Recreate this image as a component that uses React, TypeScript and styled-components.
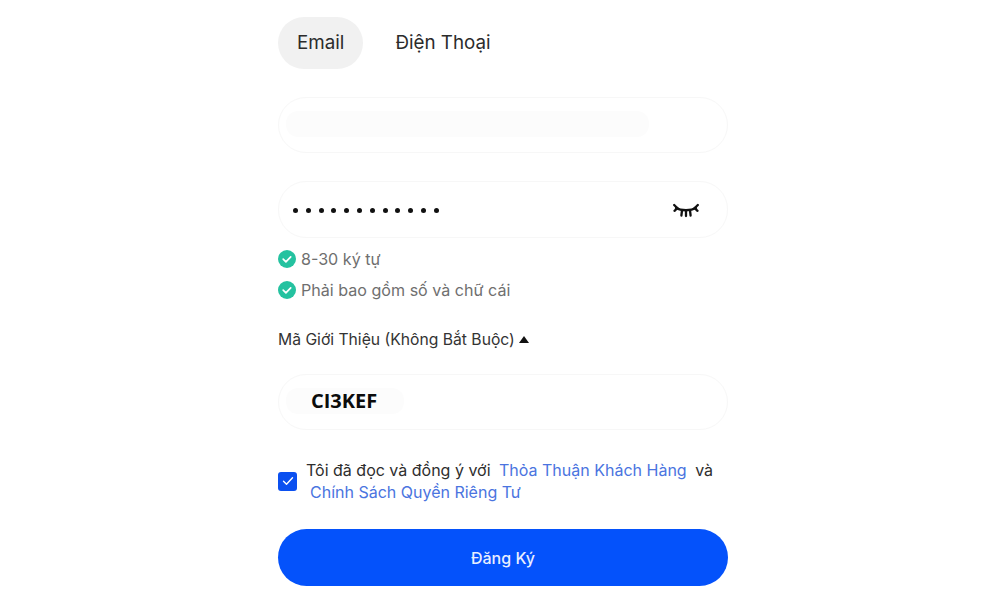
import React from 'react';
import styled, { createGlobalStyle } from 'styled-components';

const GlobalStyle = createGlobalStyle`
  html, body {
    margin: 0;
    padding: 0;
    background: #ffffff;
    font-family: 'Inter', 'Liberation Sans', sans-serif;
  }
`;

const CheckBadge = () => (
  <svg width="18" height="18" viewBox="0 0 18 18" aria-hidden="true">
    <circle cx="9" cy="9" r="9" fill="#25c2a0" />
    <path d="M5.2 9.2l2.7 2.6 4.8-5" fill="none" stroke="#fff" strokeWidth="1.7" strokeLinecap="round" strokeLinejoin="round" />
  </svg>
);

const ClosedEye = () => (
  <svg width="26" height="16" viewBox="0 0 26 16" aria-hidden="true">
    <g fill="none" stroke="#111" strokeWidth="2.3" strokeLinecap="round">
      <path d="M3 6C8 9 18 9 23 6" />
      <path d="M1.2 3l3 3M24.8 3l-3 3M1.5 8.8l3-2.8M24.5 8.8l-3-2.8" />
      <path d="M9 8.5L8.4 13.5M13 9v5M17 8.5l.6 5" />
    </g>
  </svg>
);

const App: React.FC = () => {
  return (
    <Page>
      <GlobalStyle />
      <Form>
        <Tabs>
          <Tab active>Email</Tab>
          <Tab>Điện Thoại</Tab>
        </Tabs>

        <Field>
          <Redacted width={363} />
        </Field>

        <PasswordField>
          <Dots>
            {Array.from({ length: 12 }).map((_, i) => (
              <Dot key={i} />
            ))}
          </Dots>
          <ClosedEye />
        </PasswordField>

        <Rules>
          <Rule>
            <CheckBadge />
            8-30 ký tự
          </Rule>
          <Rule>
            <CheckBadge />
            Phải bao gồm số và chữ cái
          </Rule>
        </Rules>

        <ReferralLabel>
          Mã Giới Thiệu (Không Bắt Buộc)
          <Caret />
        </ReferralLabel>

        <ReferralField>
          <Redacted width={118}>
            <Code>CI3KEF</Code>
          </Redacted>
        </ReferralField>

        <Agreement>
          <CheckBox>
            <svg width="12" height="10" viewBox="0 0 12 10" aria-hidden="true">
              <path d="M1.5 5.2l3 3 6-6.4" fill="none" stroke="#fff" strokeWidth="1.4" strokeLinecap="round" strokeLinejoin="round" />
            </svg>
          </CheckBox>
          <AgreementText>
            <Line>
              Tôi đã đọc và đồng ý với <TermLink>Thỏa Thuận Khách Hàng</TermLink> và
            </Line>
            <Line>
              <TermLink>Chính Sách Quyền Riêng Tư</TermLink>
            </Line>
          </AgreementText>
        </Agreement>

        <Submit>Đăng Ký</Submit>
      </Form>
    </Page>
  );
};

const Page = styled.div`
  width: 1000px;
  height: 600px;
  overflow: hidden;
  display: flex;
  justify-content: center;
  background: #ffffff;
`;

const Form = styled.div`
  width: 450px;
  margin-left: 6px;
  padding-top: 17px;
  display: flex;
  flex-direction: column;
`;

const Tabs = styled.div`
  display: flex;
  height: 52px;
  margin-bottom: 28px;
`;

const Tab = styled.div<{ active?: boolean }>`
  display: flex;
  align-items: center;
  height: 52px;
  padding: 0 ${props => (props.active ? '19px' : '32px')};
  padding-bottom: 2px;
  box-sizing: border-box;
  border-radius: 26px;
  background: ${props => (props.active ? '#f1f1f1' : 'transparent')};
  font-size: 18.8px;
  color: #2b2b2b;
`;

const Field = styled.div`
  box-sizing: border-box;
  height: 56px;
  padding: 0 7px;
  display: flex;
  align-items: center;
  border: 1px solid #f7f7f7;
  border-radius: 28px;
  margin-bottom: 28px;
`;

const PasswordField = styled(Field)`
  height: 57px;
  justify-content: space-between;
  padding: 0 28px 0 14px;
  margin-bottom: 10px;
`;

const ReferralField = styled(Field)`
  margin-bottom: 29px;
`;

const Redacted = styled.div<{ width: number }>`
  box-sizing: border-box;
  width: ${props => props.width}px;
  height: 26px;
  margin-top: -2px;
  padding-left: 25px;
  display: flex;
  align-items: center;
  border-radius: 12px;
  background: #fcfcfc;
`;

const Code = styled.span`
  margin-top: -1px;
  font-family: 'Open Sans', sans-serif;
  font-weight: 700;
  font-size: 20px;
  color: #0c0c0c;
`;

const Dots = styled.div`
  display: flex;
  gap: 7.8px;
  margin-top: 2px;
`;

const Dot = styled.span`
  width: 5px;
  height: 5px;
  border-radius: 50%;
  background: #111111;
`;

const Rules = styled.div`
  display: flex;
  flex-direction: column;
  gap: 9px;
  margin-bottom: 28px;
`;

const Rule = styled.div`
  display: flex;
  align-items: center;
  gap: 5px;
  height: 22px;
  font-size: 16.1px;
  color: #6f6f6f;
`;

const ReferralLabel = styled.div`
  box-sizing: border-box;
  display: flex;
  align-items: center;
  gap: 4px;
  height: 22px;
  padding-bottom: 2px;
  margin-bottom: 23px;
  font-size: 15.7px;
  color: #333333;
`;

const Caret = styled.span`
  width: 0;
  height: 0;
  border-left: 5px solid transparent;
  border-right: 5px solid transparent;
  border-bottom: 7px solid #111111;
`;

const Agreement = styled.div`
  display: flex;
  align-items: center;
  gap: 9px;
  margin-bottom: 26px;
`;

const CheckBox = styled.div`
  width: 19px;
  height: 19px;
  flex-shrink: 0;
  display: flex;
  align-items: center;
  justify-content: center;
  border-radius: 3px;
  background: #0b50f0;
`;

const AgreementText = styled.div`
  font-size: 16px;
  color: #2e2e2e;
`;

const Line = styled.div`
  height: 22px;
  line-height: 23px;
  white-space: pre-wrap;
`;

const TermLink = styled.span`
  color: #4a74e0;
  margin: 0 4px;
`;

const Submit = styled.button`
  height: 57px;
  padding-top: 2px;
  border: none;
  border-radius: 29px;
  background: #0452fb;
  color: #e8eeff;
  font-family: 'Inter', sans-serif;
  font-size: 16px;
  font-weight: 500;
`;

export default App;
